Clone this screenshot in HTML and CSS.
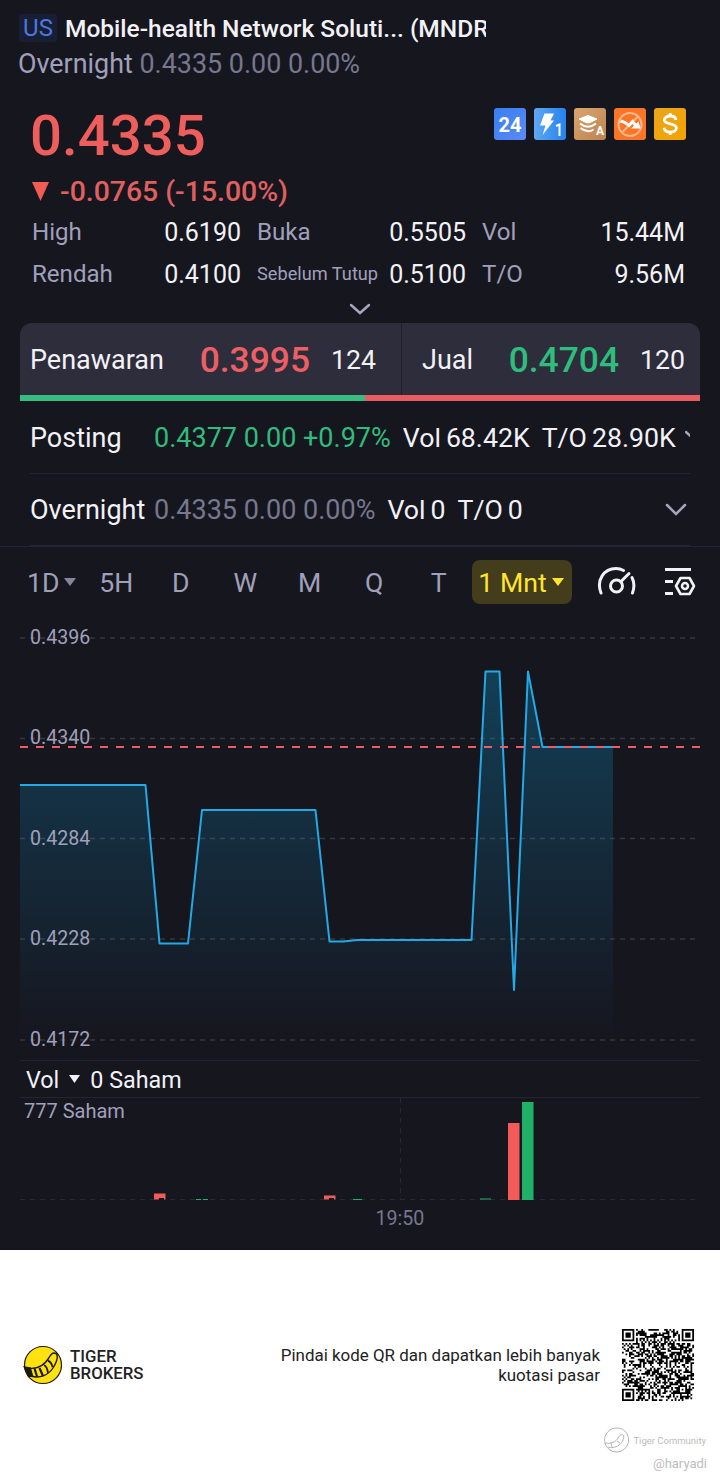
FILE: index.html
```
<!DOCTYPE html>
<html lang="id">
<head>
    <meta charset="UTF-8">
    <meta name="viewport" content="width=device-width, initial-scale=1.0">
    <title>MNDR</title>
    <link rel="stylesheet" href="styles.css">
</head>
<body>

    <div class="quote">
        <header class="top">
            <div class="name-row">
                <span class="market">US</span>
                <h1>Mobile-health Network Soluti... (MNDR)</h1>
            </div>
            <div class="session"><span class="label">Overnight</span> <span class="muted">0.4335 0.00 0.00%</span></div>
        </header>

        <section class="price-row">
            <div class="price">0.4335</div>
            <div class="badges">
                <svg viewBox="0 0 32 32"><defs><linearGradient id="b1" x2="1" y2="1"><stop stop-color="#397ef0"/><stop offset="1" stop-color="#5b8af8"/></linearGradient></defs><rect width="32" height="32" rx="3" fill="url(#b1)"/><text x="16" y="23.5" class="b24">24</text></svg>
                <svg viewBox="0 0 32 32"><defs><linearGradient id="b2" x2="1"><stop stop-color="#5fa8f3"/><stop offset="1" stop-color="#2582ee"/></linearGradient></defs><rect width="32" height="32" rx="3" fill="url(#b2)"/><path d="M10.500 5.500H20l-3.500 7H20L8.500 27l3-9.500H6z" fill="#fff"/><path d="M22 18l3.500-1.500V28" fill="none" stroke="#fff" stroke-width="2"/></svg>
                <svg viewBox="0 0 32 32"><defs><linearGradient id="b3" x2="1" y2="1"><stop stop-color="#dba471"/><stop offset="1" stop-color="#bd8351"/></linearGradient></defs><rect width="32" height="32" rx="3" fill="url(#b3)"/><path d="M14 7.500l9 3.500-7 3.500q-2 .8-4 0L5 11z" fill="#fff" stroke="#fff" stroke-linejoin="round"/><path d="M6 15.500q8 6.500 16 0M6.500 20q7 5.500 13 1.500" fill="none" stroke="#fff" stroke-width="2"/><text x="26" y="27" class="ba">A</text></svg>
                <svg viewBox="0 0 32 32"><rect width="32" height="32" rx="3" fill="#fb7527"/><circle cx="16" cy="16.500" r="11.500" fill="none" stroke="#ffb78c" stroke-width="2"/><path d="M8 24.500l16-16" stroke="#ffb78c" stroke-width="2"/><path d="M6.500 13l4.500 1.500 4 3 3.500-4 4 5" fill="none" stroke="#fff" stroke-width="3"/><path d="M17 20.500h9.500l-2-7z" fill="#fff"/></svg>
                <svg viewBox="0 0 32 32"><defs><linearGradient id="b5" y2="1"><stop stop-color="#e9a51d"/><stop offset="1" stop-color="#f5a400"/></linearGradient></defs><rect width="32" height="32" rx="3" fill="url(#b5)"/><path d="M22 12C21.500 9 19 8 16.200 8c-3.400 0-5.800 1.500-5.800 4 0 5.200 12 2.500 12 8 0 2.500-2.700 4.200-6.200 4.200-3.300 0-5.700-1.500-6.200-4.400M16.200 5v3M16.200 24v3" fill="none" stroke="#fff" stroke-width="2.800"/></svg>
            </div>
        </section>
        <div class="change"><svg width="17" height="19"><path d="M0 0h17L8.500 19z" fill="#f35b55"/></svg>-0.0765 (-15.00%)</div>

        <section class="stats">
            <div class="stat"><span>High</span><b>0.6190</b></div>
            <div class="stat"><span>Buka</span><b>0.5505</b></div>
            <div class="stat"><span>Vol</span><b>15.44M</b></div>
            <div class="stat"><span>Rendah</span><b>0.4100</b></div>
            <div class="stat"><span class="small">Sebelum Tutup</span><b>0.5100</b></div>
            <div class="stat"><span>T/O</span><b>9.56M</b></div>
        </section>
        <div class="more"><svg width="22" height="12"><path d="M2 2l9 8 9-8" class="chev"/></svg></div>

        <section class="book">
            <div class="side bid"><span>Penawaran</span><b class="red">0.3995</b><span class="qty">124</span></div>
            <div class="side ask"><span>Jual</span><b class="green">0.4704</b><span class="qty">120</span></div>
        </section>
        <div class="ratio"><div class="ratio-bid"></div></div>

        <section class="sessions">
            <div class="line posting">
                <span class="line-name">Posting</span>
                <span class="green">0.4377 0.00 +0.97%</span>
                <span class="extra">Vol<i></i>68.42K</span>
                <span class="extra">T/O<i></i>28.90K</span>
                <svg class="cut" width="6" height="22" viewBox="0 0 6 22"><path d="M1 5l9 8" class="chev"/></svg>
            </div>
            <div class="line">
                <span class="line-name">Overnight</span>
                <span class="muted">0.4335 0.00 0.00%</span>
                <span class="extra">Vol<i></i>0</span>
                <span class="extra">T/O<i></i>0</span>
                <svg class="open" width="22" height="14"><path d="M2 2l9 9 9-9" class="chev"/></svg>
            </div>
        </section>

        <nav class="tabs">
            <span class="tab">1D<svg width="12" height="8"><path d="M0 0h12L6 8z" fill="#85859d"/></svg></span>
            <span class="tab">5H</span>
            <span class="tab">D</span>
            <span class="tab">W</span>
            <span class="tab">M</span>
            <span class="tab">Q</span>
            <span class="tab">T</span>
            <span class="tab active">1 Mnt<svg width="12" height="8"><path d="M0 0h12L6 8z" fill="#ffe52e"/></svg></span>
            <svg class="gauge" width="40" height="32" viewBox="0 0 40 32"><g fill="none" stroke="#f2f2f6" stroke-width="3" stroke-linecap="round"><path d="M4 27C-1 14 7 2.500 19 2.500c3 0 5 .5 7.500 2"/><path d="M35 11.500c2.500 5 2.500 10 .5 15.500"/><circle cx="19.500" cy="20" r="6"/><path d="M24 15.500l8-8"/></g></svg>
            <svg class="settings" width="32" height="30" viewBox="0 0 32 30"><g fill="none" stroke="#f2f2f6" stroke-width="3"><path d="M1 2.500h26M1 14.500h8M1 26.500h8"/><path d="M16.500 11h9l4.500 8-4.500 8h-9L12 19z" stroke-linejoin="round" stroke-width="2.600"/><circle cx="21" cy="19" r="3" stroke-width="2.500"/></g></svg>
        </nav>

        <svg class="chart" width="720" height="440" viewBox="0 620 720 440">
            <defs>
                <linearGradient id="fill" gradientUnits="userSpaceOnUse" x1="0" y1="671" x2="0" y2="1040">
                    <stop stop-color="#0c9ad0" stop-opacity=".31"/>
                    <stop offset="1" stop-color="#0c9ad0" stop-opacity="0"/>
                </linearGradient>
            </defs>
            <path class="grid" d="M20 638H700M20 738.500H700M20 838.500H700M20 939H700M20 1040H700"/>
            <path fill="url(#fill)" d="M20 785H145.500L159.500 943.500H188L202 810H315.500L329.500 941.500H343L357.500 940H471.500L485.500 671.500H499.500L514 990 528 671.500 542.500 747H613V1040H20z"/>
            <path class="price-line" d="M20 785H145.500L159.500 943.500H188L202 810H315.500L329.500 941.500H343L357.500 940H471.500L485.500 671.500H499.500L514 990 528 671.500 542.500 747H613"/>
            <path class="last" d="M20 747H700"/>
            <g class="axis">
                <text x="30" y="644">0.4396</text>
                <text x="30" y="744">0.4340</text>
                <text x="30" y="845">0.4284</text>
                <text x="30" y="945">0.4228</text>
                <text x="30" y="1046">0.4172</text>
            </g>
        </svg>

        <div class="vol-head">Vol<svg width="11" height="8"><path d="M0 0h11L5.500 8z" fill="#f2f2f6"/></svg>0 Saham</div>
        <svg class="volume" width="720" height="152" viewBox="0 1098 720 152">
            <path class="vgrid" d="M400.500 1098V1199M20 1199.500H695"/>
            <path fill="#f35b5b" d="M154 1193.500h11.500v6H154zM324 1195.500h11.500v4H324zM508 1123h11.500v77H508z"/>
            <path fill="#1fb06a" d="M522 1102h11.500v98H522zM196 1199h5v1h-5zM203 1199h5v1h-5zM353 1199h9v1h-9zM480 1198.500h11v1h-11z"/>
            <path fill="#16161f" d="M159 1198h5v2h-5zM329 1198h5v2h-5z"/>
            <text x="24" y="1118" class="vmax">777 Saham</text>
            <text x="400" y="1225" class="time">19:50</text>
        </svg>
    </div>

    <footer class="share">
        <div class="promo">
            <svg class="logo" width="40" height="40" viewBox="0 0 40 40"><circle cx="20" cy="20" r="18.500" fill="#ffe10f" stroke="#1a1a10" stroke-width="1.200"/><path d="M2 22.500c11 3 19-2 23.500-9 2-3.500 3-5.500 5.500-5.500 3.500 0 4 4 2.500 8C30 25.500 23 32 14 32c-4 0-7-1-9-3" fill="none" stroke="#1a1a10" stroke-width="1.400"/><path d="M2 22.500l5 1 2 7-3 .5zM11.500 23.500l2.500 8M16.500 23l3.500 8" fill="#1a1a10" stroke="#1a1a10" stroke-width="2.200"/><path d="M21 20c2 1 3.500 4 4 8M25 16c2 0 4 3 4.500 6" fill="none" stroke="#1a1a10" stroke-width="1.800"/></svg>
            <div class="brand">TIGER<br>BROKERS</div>
            <p>Pindai kode QR dan dapatkan lebih banyak kuotasi pasar</p>
            <svg class="qr" id="qr" width="72" height="72" viewBox="0 0 41 41"></svg>
        </div>
        <div class="mark">
            <svg width="26" height="26" viewBox="0 0 26 26"><g fill="none" stroke="#b4b4b4"><path d="M24.500 8A12 12 0 1 1 14 1c5 0 9 3 10.500 7z"/><path d="M2 16c6 1 11-1 13-5 2-3 3-4 5-3 2 2 0 7-4 10-4 3-8 3-11 2M8 16l1 4M14 14l3 2"/></g></svg>
            <span>Tiger Community</span>
        </div>
        <div class="user">@haryadi</div>
    </footer>

    <script>
        // version 6 code, 41 x 41 modules
        const size = 41;
        let seed = 77;
        let d = "";

        function finder(x, y, fx, fy) {
            const r = Math.max(Math.abs(x - fx), Math.abs(y - fy));
            if (r > 4) return null;
            return r === 3 || r <= 1;
        }

        for (let y = 0; y < size; y++) {
            for (let x = 0; x < size; x++) {
                seed = (seed * 1103515245 + 12345) % 2147483648;
                let on = seed / 2147483648 < 0.52;
                const f = finder(x, y, 3, 3) ?? finder(x, y, 37, 3) ?? finder(x, y, 3, 37);
                const r = Math.max(Math.abs(x - 34), Math.abs(y - 34));
                if (f !== null) on = f;
                else if (r <= 2) on = r !== 1;
                else if (x === 6 || y === 6) on = (x + y) % 2 === 0;
                if (on) d += `M${x} ${y}h1v1h-1z`;
            }
        }
        document.getElementById("qr").innerHTML = `<path d="${d}"/>`;
    </script>

</body>
</html>
```
FILE: styles.css
```
* {
    box-sizing: border-box;
}
body {
    margin: 0;
    width: 720px;
    height: 1480px;
    overflow: hidden;
    background: #fff;
    font-family: Roboto, sans-serif;
    font-size: 27px;
    color: #f2f2f6;
}
svg {
    display: block;
    flex: none;
}
.quote {
    height: 1250px;
    background: #16161f;
}
.top {
    height: 100px;
    padding: 12px 0 0 19px;
}
.name-row {
    display: flex;
    align-items: center;
    width: 467px;
    height: 32px;
    overflow: hidden;
}
.market {
    flex: none;
    width: 38px;
    height: 28px;
    margin-right: 8px;
    border-radius: 3px;
    background: #181e35;
    color: #4d78dc;
    font-size: 24px;
    line-height: 29px;
    text-align: center;
}
h1 {
    margin: 0;
    font-size: 24.5px;
    font-weight: 500;
    line-height: 33px;
    white-space: nowrap;
}
.session {
    margin-left: -1px;
    font-size: 26.9px;
    line-height: 41px;
    white-space: nowrap;
}
.label {
    color: #a0a0bb;
}
.muted {
    color: #77778e;
}
.red {
    color: #ec5f64;
}
.green {
    color: #2fbd7d;
}
.price-row {
    display: flex;
    justify-content: space-between;
    height: 72px;
    padding: 0 34px 0 30px;
}
.price {
    color: #ee5e5c;
    font-size: 56.3px;
    font-weight: 500;
    line-height: 73px;
}
.badges {
    display: flex;
    gap: 8px;
    padding-top: 8px;
}
.badges svg {
    width: 32px;
    height: 32px;
}
.b24 {
    font-size: 20px;
    font-weight: 700;
    fill: #fff;
    text-anchor: middle;
}
.ba {
    font-size: 12px;
    font-weight: 700;
    fill: #fff;
    text-anchor: middle;
}
.change {
    display: flex;
    align-items: center;
    gap: 11px;
    height: 39px;
    padding-left: 32px;
    color: #e0605f;
    font-size: 28.4px;
    font-weight: 500;
}
.stats {
    display: grid;
    grid-template-columns: 209px 209px 203px;
    grid-auto-rows: 42px;
    column-gap: 16px;
    padding-left: 32px;
}
.stat {
    display: flex;
    align-items: center;
    justify-content: space-between;
    font-size: 25px;
    white-space: nowrap;
}
.stat span {
    color: #a0a0bb;
    font-size: 24.1px;
}
.stat .small {
    font-size: 18.2px;
    margin-top: -2px;
}
.stat b {
    font-weight: 400;
}
.chev {
    fill: none;
    stroke: #a5a5bd;
    stroke-width: 2.5;
    stroke-linecap: round;
}
.more {
    display: flex;
    justify-content: center;
    height: 28px;
    padding-top: 8px;
}
.book {
    display: flex;
    height: 72px;
    margin: 0 20px;
    border-radius: 12px 12px 0 0;
    background: #2d2d3c;
}
.side {
    display: flex;
    align-items: center;
    padding-top: 2px;
}
.side b {
    margin-left: auto;
    margin-right: 21px;
    font-size: 35.4px;
    font-weight: 500;
}
.qty {
    font-size: 26.67px;
}
.bid {
    width: 382px;
    padding-left: 10px;
    padding-right: 25px;
    border-right: 1px solid #20202c;
}
.ask {
    flex: 1;
    padding-left: 20px;
    padding-right: 15px;
}
.ratio {
    height: 6px;
    margin: 0 20px;
    background: #e85d61;
}
.ratio-bid {
    width: 345px;
    height: 6px;
    background: #36bd81;
}
.sessions {
    height: 146px;
    border-bottom: 1px solid #25252f;
}
.line {
    display: flex;
    align-items: center;
    height: 72px;
    margin: 0 30px;
    border-bottom: 1px solid #25252f;
    overflow: hidden;
    white-space: nowrap;
}
.posting {
    height: 73px;
    padding-top: 2px;
}
.line-name {
    flex: none;
    width: 124px;
}
.extra {
    margin-left: 12px;
    font-size: 26.7px;
}
.extra i {
    display: inline-block;
    width: 5px;
}
.cut {
    margin-left: 9px;
}
.open {
    margin-left: auto;
    margin-right: 3px;
}
.tabs {
    display: grid;
    grid-template-columns: repeat(7, 64.5px) 100px 64px 60px;
    align-items: center;
    height: 73px;
    padding: 0 0 3px 20px;
    color: #a0a0bb;
    font-size: 26.67px;
}
.tab {
    display: flex;
    align-items: center;
    justify-content: center;
    gap: 5px;
    height: 44px;
    padding-top: 2px;
    padding-right: 1px;
    white-space: nowrap;
}
.tab svg {
    margin-top: -3px;
}
.active {
    border-radius: 8px;
    background: #443d1b;
    color: #ffe52e;
}
.gauge {
    margin-left: 25px;
}
.settings {
    margin-left: 28px;
}
.chart {
    height: 440px;
}
.grid,
.vgrid {
    fill: none;
    stroke: #37373e;
    stroke-width: 1.5;
    stroke-dasharray: 5 5;
}
.vgrid {
    stroke: #292933;
    stroke-width: 1;
}
.price-line {
    fill: none;
    stroke: #23a9e6;
    stroke-width: 2;
    stroke-linejoin: round;
}
.last {
    stroke: #ee5d66;
    stroke-width: 2;
    stroke-dasharray: 8 8;
}
.axis text,
.vmax,
.time {
    font-size: 19.6px;
    fill: #a0a0bb;
}
.vmax {
    font-size: 20px;
}
.time {
    fill: #77778e;
    text-anchor: middle;
}
.vol-head {
    display: flex;
    align-items: center;
    gap: 10px;
    height: 38px;
    margin: 0 20px;
    padding: 2px 0 0 6px;
    border-top: 1px solid #25252f;
    border-bottom: 1px solid #25252f;
    font-size: 23.3px;
}
.vol-head svg {
    margin-top: -3px;
}
.share {
    height: 230px;
    padding-top: 78px;
    color: #222;
}
.promo {
    display: flex;
    align-items: center;
    height: 74px;
    padding: 0 26px 0 23px;
}
.brand {
    margin-left: 7px;
    font-size: 16.8px;
    font-weight: 500;
    line-height: 17px;
}
.promo p {
    width: 330px;
    margin: 0 22px 0 auto;
    font-size: 16.95px;
    line-height: 20px;
    text-align: right;
}
.mark {
    display: flex;
    align-items: center;
    justify-content: flex-end;
    gap: 4px;
    height: 26px;
    margin-top: 25px;
    padding-right: 14px;
    color: #bcbcbc;
    font-size: 9.5px;
}
.user {
    padding-top: 1px;
    padding-right: 13px;
    color: #bcbcbc;
    font-size: 13px;
    line-height: 20px;
    text-align: right;
}
```
